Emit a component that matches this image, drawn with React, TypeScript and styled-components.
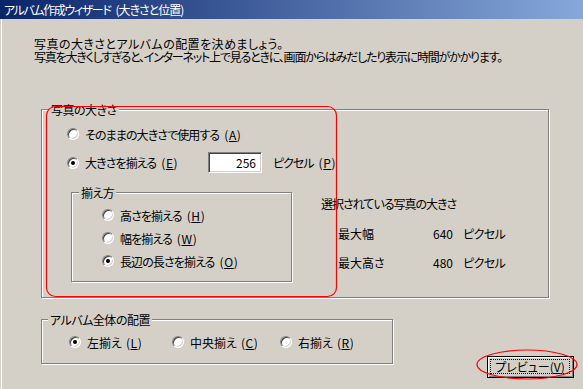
import React from "react";
import styled, { createGlobalStyle } from "styled-components";

const Global = createGlobalStyle`
  html, body { margin: 0; padding: 0; background: #d4d0c8; }
  body {
    width: 583px; height: 389px; overflow: hidden;
    font-family: "Noto Sans CJK JP", "Noto Sans", sans-serif;
    font-size: 12px; color: #000;
  }
`;

const Window = styled.div`
  position: relative;
  width: 583px;
  height: 389px;
  background: #d4d0c8;
  display: flex;
  flex-direction: column;
  font-feature-settings: "palt";
  line-height: 13px;
`;

const TitleBar = styled.div`
  height: 19px;
  flex: none;
  background: linear-gradient(to right, #0a246a, #86a8da);
  color: #fff;
  font-size: 12px;
  letter-spacing: -1.4px;
  line-height: 19px;
  padding-left: 4px;
  white-space: nowrap;
`;

const TitleSub = styled.span`
  margin-left: 5px;
  letter-spacing: -1px;
`;

const Main = styled.div`
  display: flex;
  flex-direction: column;
  padding: 0 9px 0 41px;
  box-shadow: inset 1px 0 0 #d4d0c8, inset 2px 0 0 #ffffff;
  flex: 1;
`;

const Intro = styled.div`
  margin: 18px 0 0 -7px;
  display: flex;
  flex-direction: column;
`;

const IntroLine = styled.div<{ $ls: number }>`
  height: 13px;
  white-space: nowrap;
  letter-spacing: ${(p) => p.$ls}px;
`;

const Group = styled.div<{ $w: number; $h: number }>`
  position: relative;
  box-sizing: border-box;
  width: ${(p) => p.$w}px;
  height: ${(p) => p.$h}px;
  border: 1px solid #808080;
  box-shadow: 1px 1px 0 #ffffff, inset 1px 1px 0 #ffffff;
  flex: none;
`;

const Legend = styled.span<{ $left: number }>`
  position: absolute;
  top: -7px;
  left: ${(p) => p.$left}px;
  padding: 0 2px;
  background: #d4d0c8;
  white-space: nowrap;
  letter-spacing: -0.5px;
`;

const SizeGroup = styled(Group)`
  margin-top: 46px;
  display: flex;
  flex-direction: column;
  padding-left: 25px;
`;

const Row = styled.div<{ $top: number; $h: number }>`
  display: flex;
  align-items: center;
  height: ${(p) => p.$h}px;
  margin-top: ${(p) => p.$top}px;
`;

const Option = styled.label<{ $w?: number; $ls?: number }>`
  display: flex;
  align-items: center;
  gap: 6px;
  height: 14px;
  white-space: nowrap;
  flex: none;
  width: ${(p) => (p.$w ? `${p.$w}px` : "auto")};
  letter-spacing: ${(p) => p.$ls ?? -0.9}px;
`;

const Radio = styled.span<{ $checked?: boolean }>`
  position: relative;
  box-sizing: border-box;
  width: 12px;
  height: 12px;
  border-radius: 50%;
  background: #fff;
  border: 1px solid;
  border-color: #808080 #ffffff #ffffff #808080;
  box-shadow: inset 1px 1px 0 #404040, inset -1px -1px 0 #d4d0c8;
  flex: none;
  &::after {
    content: "";
    display: ${(p) => (p.$checked ? "block" : "none")};
    position: absolute;
    left: 3px;
    top: 3px;
    width: 4px;
    height: 4px;
    border-radius: 50%;
    background: #000;
  }
`;

const Hot = styled.span<{ $gap?: number }>`
  margin-left: ${(p) => p.$gap ?? 5}px;
  letter-spacing: 0.6px;
`;

const Key = styled.span`
  text-decoration: underline;
`;

const NumberBox = styled.div`
  box-sizing: border-box;
  width: 54px;
  height: 21px;
  background: #fff;
  border: 1px solid;
  border-color: #808080 #ffffff #ffffff #808080;
  box-shadow: inset 1px 1px 0 #404040, inset -1px -1px 0 #d4d0c8;
  text-align: right;
  padding-right: 5px;
  line-height: 19px;
  flex: none;
`;

const Unit = styled.span`
  margin-left: 11px;
  white-space: nowrap;
  letter-spacing: -1px;
`;

const Lower = styled.div`
  display: flex;
  align-items: flex-start;
  margin-top: 19px;
  margin-left: 4px;
`;

const AlignGroup = styled(Group)`
  display: flex;
  flex-direction: column;
  gap: 9px;
  padding: 15px 0 0 30px;
`;

const Info = styled.div`
  margin: 5px 0 0 29px;
  display: flex;
  flex-direction: column;
`;

const InfoTitle = styled.div`
  white-space: nowrap;
  letter-spacing: -1px;
`;

const InfoGrid = styled.div`
  display: grid;
  grid-template-columns: 85px 30px auto;
  row-gap: 16px;
  margin: 17px 0 0 17px;
  white-space: nowrap;
`;

const Value = styled.span`
  text-align: right;
`;

const InfoUnit = styled.span`
  margin-left: 10px;
  letter-spacing: -0.6px;
`;

const BottomRow = styled.div`
  display: flex;
  align-items: flex-start;
  margin-top: 21px;
`;

const AlbumGroup = styled(Group)`
  display: flex;
  align-items: flex-start;
  padding: 15px 0 0 27px;
`;

const Button = styled.button`
  box-sizing: border-box;
  width: 87px;
  height: 22px;
  margin: 37px 0 0 auto;
  padding: 0;
  background: #d4d0c8;
  border: 1px solid #000;
  box-shadow: inset 1px 1px 0 #ffffff, inset -1px -1px 0 #808080;
  font: inherit;
  color: #000;
  display: flex;
  flex: none;
`;

const Focus = styled.span`
  flex: 1;
  margin: 2px 3px 3px 2px;
  border: 1px dotted #000;
  display: flex;
  align-items: center;
  justify-content: center;
  line-height: 12px;
`;

const Annotations = styled.svg`
  position: absolute;
  left: 0;
  top: 0;
  pointer-events: none;
`;

export default function App() {
  return (
    <>
      <Global />
      <Window>
        <TitleBar>
          アルバム作成ウィザード<TitleSub>(大きさと位置)</TitleSub>
        </TitleBar>
        <Main>
          <Intro>
            <IntroLine $ls={0.45}>写真の大きさとアルバムの配置を決めましょう。</IntroLine>
            <IntroLine $ls={-1.2}>
              写真を大きくしすぎると、インターネット上で見るときに、画面からはみだしたり表示に時間がかかります。
            </IntroLine>
          </Intro>

          <SizeGroup $w={508} $h={189}>
            <Legend $left={7}>写真の大きさ</Legend>
            <Row $top={16} $h={16}>
              <Option>
                <Radio />
                <span>
                  そのままの大きさで使用する
                  <Hot>
                    (<Key>A</Key>)
                  </Hot>
                </span>
              </Option>
            </Row>
            <Row $top={10} $h={21}>
              <Option $w={141}>
                <Radio $checked />
                <span>
                  大きさを揃える
                  <Hot>
                    (<Key>E</Key>)
                  </Hot>
                </span>
              </Option>
              <NumberBox>256</NumberBox>
              <Unit>
                ピクセル
                <Hot>
                  (<Key>P</Key>)
                </Hot>
              </Unit>
            </Row>
            <Lower>
              <AlignGroup $w={221} $h={90}>
                <Legend $left={7}>揃え方</Legend>
                <Option>
                  <Radio />
                  <span>
                    高さを揃える
                    <Hot>
                      (<Key>H</Key>)
                    </Hot>
                  </span>
                </Option>
                <Option>
                  <Radio />
                  <span>
                    幅を揃える
                    <Hot>
                      (<Key>W</Key>)
                    </Hot>
                  </span>
                </Option>
                <Option>
                  <Radio $checked />
                  <span>
                    長辺の長さを揃える
                    <Hot>
                      (<Key>O</Key>)
                    </Hot>
                  </span>
                </Option>
              </AlignGroup>
              <Info>
                <InfoTitle>選択されている写真の大きさ</InfoTitle>
                <InfoGrid>
                  <span>最大幅</span>
                  <Value>640</Value>
                  <InfoUnit>ピクセル</InfoUnit>
                  <span>最大高さ</span>
                  <Value>480</Value>
                  <InfoUnit>ピクセル</InfoUnit>
                </InfoGrid>
              </Info>
            </Lower>
          </SizeGroup>

          <BottomRow>
            <AlbumGroup $w={352} $h={45}>
              <Legend $left={6}>アルバム全体の配置</Legend>
              <Option $w={103} $ls={0}>
                <Radio $checked />
                <span>
                  左揃え
                  <Hot $gap={4}>
                    (<Key>L</Key>)
                  </Hot>
                </span>
              </Option>
              <Option $w={108} $ls={0}>
                <Radio />
                <span>
                  中央揃え
                  <Hot $gap={4}>
                    (<Key>C</Key>)
                  </Hot>
                </span>
              </Option>
              <Option $ls={0}>
                <Radio />
                <span>
                  右揃え
                  <Hot $gap={4}>
                    (<Key>R</Key>)
                  </Hot>
                </span>
              </Option>
            </AlbumGroup>
            <Button type="button">
              <Focus>
                プレビュー(<Key>V</Key>)
              </Focus>
            </Button>
          </BottomRow>
        </Main>
        <Annotations width={583} height={389} viewBox="0 0 583 389">
          <rect x={46.5} y={106.5} width={290} height={190} rx={9} fill="none" stroke="#ff0000" strokeWidth={1.2} />
          <ellipse cx={527} cy={364.5} rx={50} ry={14.5} fill="none" stroke="#ff0000" strokeWidth={1.2} />
        </Annotations>
      </Window>
    </>
  );
}
